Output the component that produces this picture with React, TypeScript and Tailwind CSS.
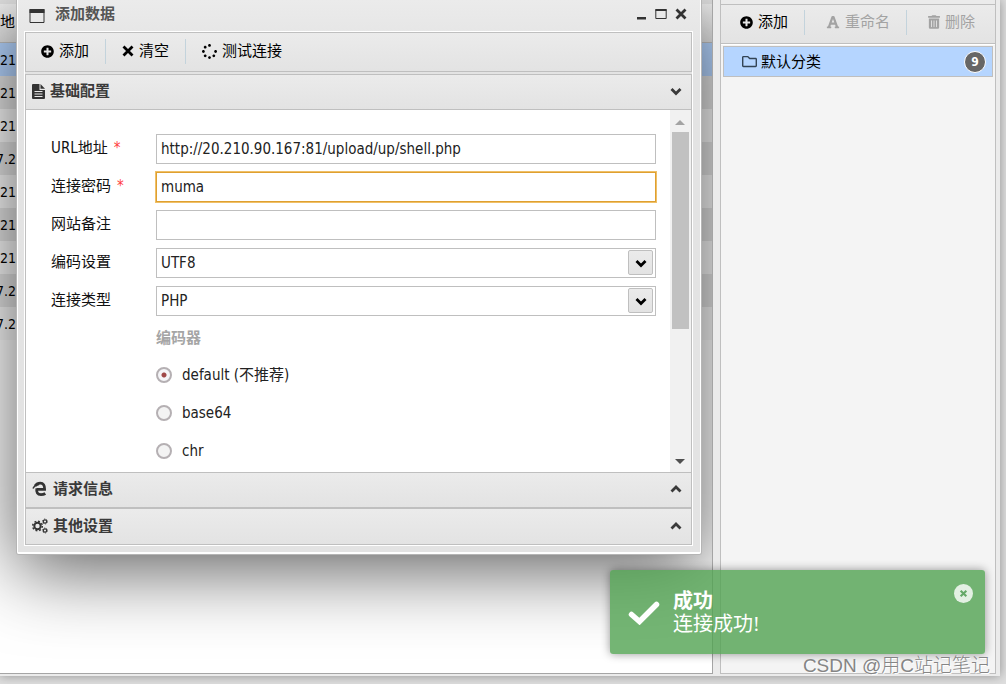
import { PropsWithChildren, useState } from "react";
import clsx from "clsx";
import {
  FaFont,
  FaPlusCircle,
  FaRegFolder,
  FaSpinner,
  FaTrashAlt,
} from "react-icons/fa";

const ROWS = ["21", "21", "21", "7.2", "21", "21", "21", "7.2", "7.2"];
const ENCODERS = [
  { value: "default", label: "default (不推荐)" },
  { value: "base64", label: "base64" },
  { value: "chr", label: "chr" },
];

export default function App() {
  return (
    <div className="h-screen overflow-hidden bg-[#dedede] pr-1.5 pb-2 font-['DejaVu_Sans_Condensed','Noto_Sans_CJK_SC',sans-serif] text-[15px] leading-5 text-black">
      <div className="flex h-full bg-[#ebebeb] pr-1 pb-0.5 shadow-[0_0_10px_rgba(0,0,0,0.35)]">
        <main className="relative min-w-0 flex-1 overflow-hidden border-r border-b border-[#a5a5a5] bg-white">
          <SiteGrid />
          <AddDataWindow />
        </main>
        <div className="w-[7px]" />
        <CategoryPanel />
      </div>
      <Toast />
      <p className="absolute right-4 bottom-1 font-['Liberation_Sans','Noto_Sans_CJK_SC',sans-serif] text-[19px] leading-7 font-light text-[#858585] [text-shadow:1px_1px_0_#fff]">
        CSDN @用C站记笔记
      </p>
    </div>
  );
}

function SiteGrid() {
  return (
    <table className="w-full border-separate border-spacing-0 text-sm">
      <thead>
        <tr className="h-[43px]">
          <th className="border-t-4 border-b border-[#e4e4e4] border-b-[#bfbfbf] bg-linear-to-b from-[#f2f2f2] to-[#e2e2e2] p-0 text-left text-[15px] font-normal">
            地
          </th>
        </tr>
      </thead>
      <tbody>
        {ROWS.map((text, index) => (
          <tr
            key={index}
            className={clsx("h-[33px]", {
              "bg-[#b5d5ff]": index === 0,
              "bg-[#e4e4e4]": index % 2 === 1,
              "bg-[#f9f9f9]": index !== 0 && index % 2 === 0,
            })}
          >
            <td className="p-0">
              <div className="flex w-4 justify-end">{text}</div>
            </td>
          </tr>
        ))}
      </tbody>
    </table>
  );
}

function AddDataWindow() {
  return (
    <section
      aria-label="添加数据"
      className="absolute top-0 right-2.5 left-4 rounded-b-[3px] border border-t-0 border-[#b5b5b5] bg-[#e4e4e4] shadow-[0_15px_75px_rgba(0,0,0,0.64)]"
    >
      <div className="rounded-b-[2px] border border-t-0 border-b-2 border-white bg-linear-to-b from-[#ebebeb] to-[#e3e3e3] to-10% pr-[7px] pb-1.5 pl-1.5">
        <header className="flex h-[31px] items-center justify-between pr-1.5 pb-1 pl-[5px]">
          <div className="flex items-center gap-2.5">
            <svg viewBox="0 0 16 16" className="mt-1 size-4" fill="none">
              <path d="M1 1.5h14v13H1z" stroke="#333" />
              <path d="M.5 1h15v4H.5z" fill="#333" />
            </svg>
            <h2 className="font-bold text-[#555]">添加数据</h2>
          </div>
          <div className="flex items-center gap-2 text-[#333]">
            <button aria-label="最小化">
              <svg viewBox="0 0 12 12" className="size-3">
                <path d="M2 9h9v2.5H2z" fill="currentColor" />
              </svg>
            </button>
            <button aria-label="最大化">
              <svg viewBox="0 0 12 12" className="size-3" fill="none">
                <path d="M.8 1.5h10.4v9H.8z" stroke="currentColor" />
                <path d="M.5 1h11v2H.5z" fill="currentColor" />
              </svg>
            </button>
            <button aria-label="关闭">
              <CrossIcon />
            </button>
          </div>
        </header>
        <div className="border border-white">
          <div className="flex h-10 items-center border border-[#bfbfbf] bg-linear-to-b from-[#ebebeb] to-[#e3e3e3] pb-0.5 pl-[15px]">
            <ToolButton>
              <FaPlusCircle className="size-[13px]" />
              添加
            </ToolButton>
            <Separator className="mx-4" />
            <ToolButton>
              <CrossIcon />
              清空
            </ToolButton>
            <Separator className="mx-4" />
            <ToolButton>
              <FaSpinner className="size-[15px]" />
              测试连接
            </ToolButton>
          </div>
          <SectionHeader title="基础配置" open className="mt-0.5">
            <FileIcon />
          </SectionHeader>
          <div className="flex border-x border-[#bfbfbf] bg-white">
            <ConfigForm />
            <ScrollBar />
          </div>
          <SectionHeader title="请求信息">
            <BrowserIcon />
          </SectionHeader>
          <SectionHeader title="其他设置">
            <GearsIcon />
          </SectionHeader>
        </div>
      </div>
    </section>
  );
}

function ConfigForm() {
  const [url, setUrl] = useState("http://20.210.90.167:81/upload/up/shell.php");
  const [password, setPassword] = useState("muma");
  const [note, setNote] = useState("");
  const [encoder, setEncoder] = useState("default");
  const field =
    "h-[30px] w-full border border-[#bfbfbf] bg-white px-1 text-[#222] outline-none";

  return (
    <form className="min-w-0 flex-1 pt-6 pr-3.5 pb-0.5 pl-[25px]">
      <div className="flex flex-col gap-2">
        <Field id="url" label="URL地址" required>
          <input
            id="url"
            className={field}
            value={url}
            onChange={(e) => setUrl(e.target.value)}
          />
        </Field>
        <Field id="password" label="连接密码" required>
          <input
            id="password"
            className="h-[30px] w-full border border-[#dfa030] bg-white px-1 text-[#222] ring-1 ring-[#efc068] outline-none"
            value={password}
            onChange={(e) => setPassword(e.target.value)}
          />
        </Field>
        <Field id="note" label="网站备注">
          <input
            id="note"
            className={field}
            value={note}
            onChange={(e) => setNote(e.target.value)}
          />
        </Field>
        <Field id="charset" label="编码设置">
          <select id="charset" className={clsx(field, "appearance-none")}>
            <option>UTF8</option>
          </select>
          <SelectArrow />
        </Field>
        <Field id="type" label="连接类型">
          <select id="type" className={clsx(field, "appearance-none")}>
            <option>PHP</option>
          </select>
          <SelectArrow />
        </Field>
      </div>
      <fieldset className="mt-2 pl-[105px]">
        <legend className="h-8 leading-7 font-bold text-[#a5a5a5]">
          编码器
        </legend>
        {ENCODERS.map(({ value, label }) => (
          <label key={value} className="flex h-[38px] items-center gap-2.5">
            <input
              type="radio"
              name="encoder"
              className="size-4 appearance-none rounded-full border-2 border-[#b5b0b3] bg-[#f3f3f3] checked:bg-[radial-gradient(circle,#a04848_2px,#f5f5f8_3px)]"
              checked={encoder === value}
              onChange={() => setEncoder(value)}
            />
            <span className="text-[#222]">{label}</span>
          </label>
        ))}
      </fieldset>
    </form>
  );
}

interface FieldProps extends PropsWithChildren {
  id: string;
  label: string;
  required?: boolean;
}

function Field({ id, label, required, children }: FieldProps) {
  return (
    <div className="flex items-center">
      <label htmlFor={id} className="w-[105px] shrink-0 pb-0.5 text-[#111]">
        {label}
        {required && <span className="ml-1.5 text-[#ff4040]">*</span>}
      </label>
      <div className="relative min-w-0 flex-1">{children}</div>
    </div>
  );
}

function SelectArrow() {
  return (
    <span className="pointer-events-none absolute top-0.5 right-[3px] flex size-[25px] items-center justify-center rounded-[2px] border border-[#bfbfbf] bg-linear-to-b from-[#ebebeb] to-[#e3e3e3]">
      <ChevronIcon />
    </span>
  );
}

function ScrollBar() {
  return (
    <div className="flex w-[21px] flex-col items-center justify-between bg-[#f1f1f1] pr-px">
      <div className="flex w-full flex-col items-center">
        <svg viewBox="0 0 10 5" className="mt-2.5 mb-[7px] h-[5px] w-2.5">
          <path d="M5 0l5 5H0z" fill="#a3a3a3" />
        </svg>
        <div className="h-[197px] w-[17px] bg-[#c1c1c1]" />
      </div>
      <svg viewBox="0 0 10 5" className="mb-2 h-[5px] w-2.5">
        <path d="M0 0h10L5 5z" fill="#505050" />
      </svg>
    </div>
  );
}

interface SectionHeaderProps extends PropsWithChildren {
  title: string;
  open?: boolean;
  className?: string;
}

function SectionHeader({
  title,
  open,
  className,
  children,
}: SectionHeaderProps) {
  return (
    <button
      aria-expanded={!!open}
      className={clsx(
        "flex h-9 w-full items-center justify-between border border-[#bfbfbf] bg-linear-to-b from-[#ebebeb] to-[#e3e3e3] pr-2 pb-0.5 pl-1.5 font-bold text-[#3a3a3a] not-first:last:h-[37px]",
        className
      )}
    >
      <span className="flex items-center gap-[5px]">
        {children}
        {title}
      </span>
      <ChevronIcon up={!open} />
    </button>
  );
}

function CategoryPanel() {
  return (
    <aside className="flex w-[276px] flex-col border-x border-b border-[#bfbfbf] bg-[#f4f4f4]">
      <div className="border-b border-white bg-[#ebebeb] pt-1">
        <div className="flex h-10 items-center border-y border-[#bfbfbf] bg-linear-to-b from-[#ebebeb] to-[#e3e3e3] pb-1 pl-[19px]">
          <ToolButton>
            <FaPlusCircle className="size-[13px]" />
            添加
          </ToolButton>
          <Separator className="mr-[21px] ml-4" />
          <ToolButton disabled>
            <FaFont className="size-[14px]" />
            重命名
          </ToolButton>
          <Separator className="mr-[21px] ml-4" />
          <ToolButton disabled>
            <FaTrashAlt className="h-[14px] w-3" />
            删除
          </ToolButton>
        </div>
      </div>
      <button className="mx-0.5 mt-px flex h-[31px] items-center gap-1 border border-[#bfbfbf] bg-[#b5d5ff] pr-1.5 pl-[18px]">
        <FaRegFolder className="size-[15px] text-[#345]" />
        <span>默认分类</span>
        <span className="ml-auto flex size-[22px] items-center justify-center rounded-full border border-white bg-[#666] text-xs font-bold text-white">
          9
        </span>
      </button>
    </aside>
  );
}

function ToolButton({
  disabled,
  children,
}: PropsWithChildren<{ disabled?: boolean }>) {
  return (
    <button
      disabled={disabled}
      className="flex items-center gap-[5px] whitespace-nowrap disabled:text-[#a3a3a3]"
    >
      {children}
    </button>
  );
}

function Separator({ className }: { className?: string }) {
  return <span className={clsx("h-[25px] w-px bg-[#c3d3dc]", className)} />;
}

function Toast() {
  return (
    <div
      role="status"
      className="absolute right-[21px] bottom-[30px] flex h-[84px] w-[375px] items-center rounded-[3px] bg-[#51a351]/80 pt-0.5 pr-3 pl-[18px] font-['Liberation_Serif','Noto_Sans_CJK_SC',serif] text-xl leading-[23px] text-white shadow-[0_0_10px_rgba(0,0,0,0.4)]"
    >
      <svg viewBox="0 0 32 24" className="h-6 w-8" fill="none">
        <path
          d="M3.5 13.5l8 7L28.5 3.5"
          stroke="currentColor"
          strokeWidth="5.5"
          strokeLinecap="round"
        />
      </svg>
      <div className="ml-[13px]">
        <strong className="block">成功</strong>
        连接成功!
      </div>
      <button aria-label="关闭通知" className="mt-3 ml-auto self-start">
        <svg viewBox="0 0 20 20" className="size-[19px]" fill="none">
          <circle cx="10" cy="10" r="10" fill="#fff" fillOpacity=".8" />
          <path d="M7 7l6 6M13 7l-6 6" stroke="#65a968" strokeWidth="2.2" />
        </svg>
      </button>
    </div>
  );
}

function CrossIcon() {
  return (
    <svg viewBox="0 0 12 12" className="size-3" fill="none">
      <path
        d="M1.5 1.5l9 9M10.5 1.5l-9 9"
        stroke="currentColor"
        strokeWidth="2.8"
      />
    </svg>
  );
}

function ChevronIcon({ up }: { up?: boolean }) {
  return (
    <svg viewBox="0 0 14 14" className="size-3.5" fill="none">
      <path
        d={up ? "M2.5 9.5L7 5l4.5 4.5" : "M2.5 5L7 9.5 11.5 5"}
        stroke="currentColor"
        strokeWidth="2.8"
      />
    </svg>
  );
}

function FileIcon() {
  return (
    <svg viewBox="0 0 13 15" className="h-[15px] w-[13px]">
      <path d="M0 1V14q0 1 1 1H12q1 0 1-1V6H7.500V0H1Q0 0 0 1z" fill="#333" />
      <path d="M8.500 0L13 4.800H8.500z" fill="#333" />
      <path
        d="M2.500 7.500h8M2.500 10h8M2.500 12.500h8"
        stroke="#e8e8e8"
        strokeWidth="1"
      />
    </svg>
  );
}

function BrowserIcon() {
  return (
    <svg viewBox="0 0 16 16" className="size-4" fill="none" stroke="#333">
      <path
        d="M4.500 8.300H12.600Q12.800 2.200 8.300 2.200Q5 2.200 3 5"
        strokeWidth="2.800"
      />
      <path
        d="M4.800 7.500Q3.800 13.500 9 13.700Q11.500 13.700 13.300 12.500"
        strokeWidth="2.800"
      />
      <path d="M1 7.500Q2.500 4 7 3.500" strokeWidth="1.500" />
    </svg>
  );
}

function GearsIcon() {
  return (
    <svg viewBox="0 0 16 16" className="size-4" fill="none" stroke="#333">
      <circle cx="5.500" cy="8" r="3.200" strokeWidth="2" />
      <circle
        cx="5.500"
        cy="8"
        r="4.800"
        strokeWidth="1.500"
        strokeDasharray="1.900 1.870"
      />
      <circle cx="13" cy="3.500" r="1.700" strokeWidth="1.200" />
      <circle
        cx="13"
        cy="3.500"
        r="2.500"
        strokeWidth=".8"
        strokeDasharray="1.300 1.310"
      />
      <circle cx="13" cy="12.500" r="1.700" strokeWidth="1.200" />
      <circle
        cx="13"
        cy="12.500"
        r="2.500"
        strokeWidth=".8"
        strokeDasharray="1.300 1.310"
      />
    </svg>
  );
}
